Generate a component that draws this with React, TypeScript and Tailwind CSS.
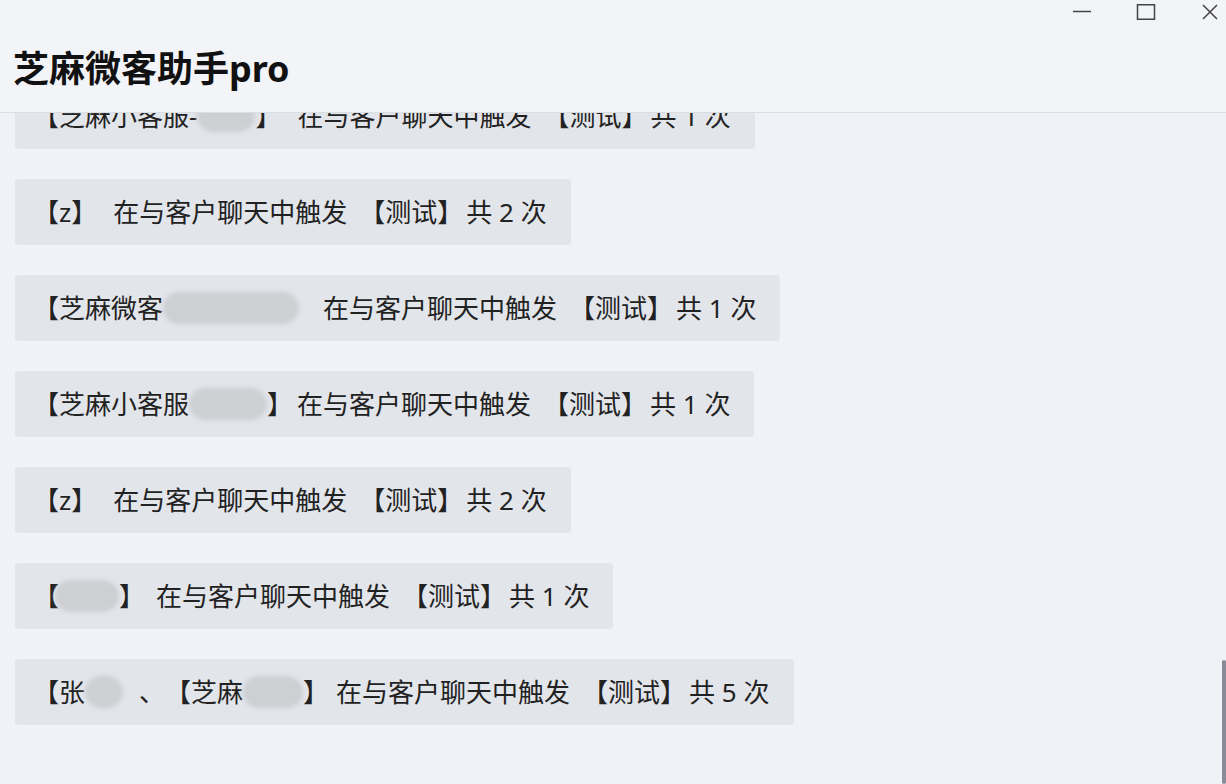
import type { ReactNode } from "react";

type Piece = string | { t: string; ml: number } | { blur: number; ml?: number };

type Row = {
  name: Piece[];
  count: number;
  gap: number;
};

const rows: Row[] = [
  { name: ["【芝麻小客服-", { blur: 58 }, "】"], count: 1, gap: 16 },
  { name: ["【z】"], count: 2, gap: 16 },
  { name: ["【芝麻微客", { blur: 136 }], count: 1, gap: 24 },
  { name: ["【芝麻小客服", { blur: 78 }, "】"], count: 1, gap: 4 },
  { name: ["【z】"], count: 2, gap: 16 },
  { name: ["【", { blur: 64, ml: -4 }, "】"], count: 1, gap: 11 },
  {
    name: ["【张", { blur: 38 }, { t: "、", ml: 16 }, "【芝麻", { blur: 60 }, "】"],
    count: 5,
    gap: 7,
  },
];

function Blur({ w, ml }: { w: number; ml?: number }) {
  return (
    <span
      className="inline-block h-[32px] rounded-full bg-[#cdcfd3] blur-[2px]"
      style={{ width: w, marginLeft: ml }}
    />
  );
}

function LogRow({ row }: { row: Row }) {
  const parts: ReactNode[] = row.name.map((p, i) => {
    if (typeof p === "string") return <span key={i}>{p}</span>;
    if ("t" in p)
      return (
        <span key={i} style={{ marginLeft: p.ml }}>
          {p.t}
        </span>
      );
    return <Blur key={i} w={p.blur} ml={p.ml} />;
  });
  return (
    <div className="flex h-[66px] w-fit items-center rounded-[4px] bg-[#e2e5ea] pl-[18px] pr-[24px] text-[26px] text-[#222]">
      <span className="flex items-center">{parts}</span>
      <span style={{ marginLeft: row.gap }}>在与客户聊天中触发</span>
      <span className="ml-[12px]">【测试】</span>
      <span className="ml-[3px]">共 {row.count} 次</span>
    </div>
  );
}

export default function App() {
  return (
    <div
      className="flex h-[784px] w-[1226px] flex-col overflow-hidden bg-[#eff2f6]"
      style={{ fontFamily: '"Noto Sans", "Noto Sans CJK SC", sans-serif' }}
    >
      <header className="relative z-10 h-[113px] shrink-0 border-b border-[#dadde2] bg-[#f2f4f7]">
        <div className="flex h-[24px] items-start justify-end pr-[8px] pt-[4px] text-[#444]">
          <svg width="20" height="16" viewBox="0 0 20 16">
            <line x1="1" y1="7.5" x2="19" y2="7.5" stroke="currentColor" strokeWidth="1.5" />
          </svg>
          <svg className="ml-[44px]" width="20" height="16" viewBox="0 0 20 16">
            <rect x="1.5" y="0.75" width="17" height="14.5" fill="none" stroke="currentColor" strokeWidth="1.5" />
          </svg>
          <svg className="ml-[46px]" width="16" height="16" viewBox="0 0 16 16">
            <path d="M1 1 L15 15 M15 1 L1 15" stroke="currentColor" strokeWidth="1.5" />
          </svg>
        </div>
        <h1 className="mt-[21px] pl-[13px] text-[36px] font-bold leading-[48px] text-[#111]">
          芝麻微客助手pro
        </h1>
      </header>
      <main className="relative flex-1 overflow-hidden">
        <div className="-mt-[30px] flex flex-col items-start gap-[30px] pl-[15px]">
          {rows.map((r, i) => (
            <LogRow key={i} row={r} />
          ))}
        </div>
        <div className="absolute bottom-0 right-0 h-[124px] w-[4px] rounded-sm bg-[#8b8a99]" />
      </main>
    </div>
  );
}
